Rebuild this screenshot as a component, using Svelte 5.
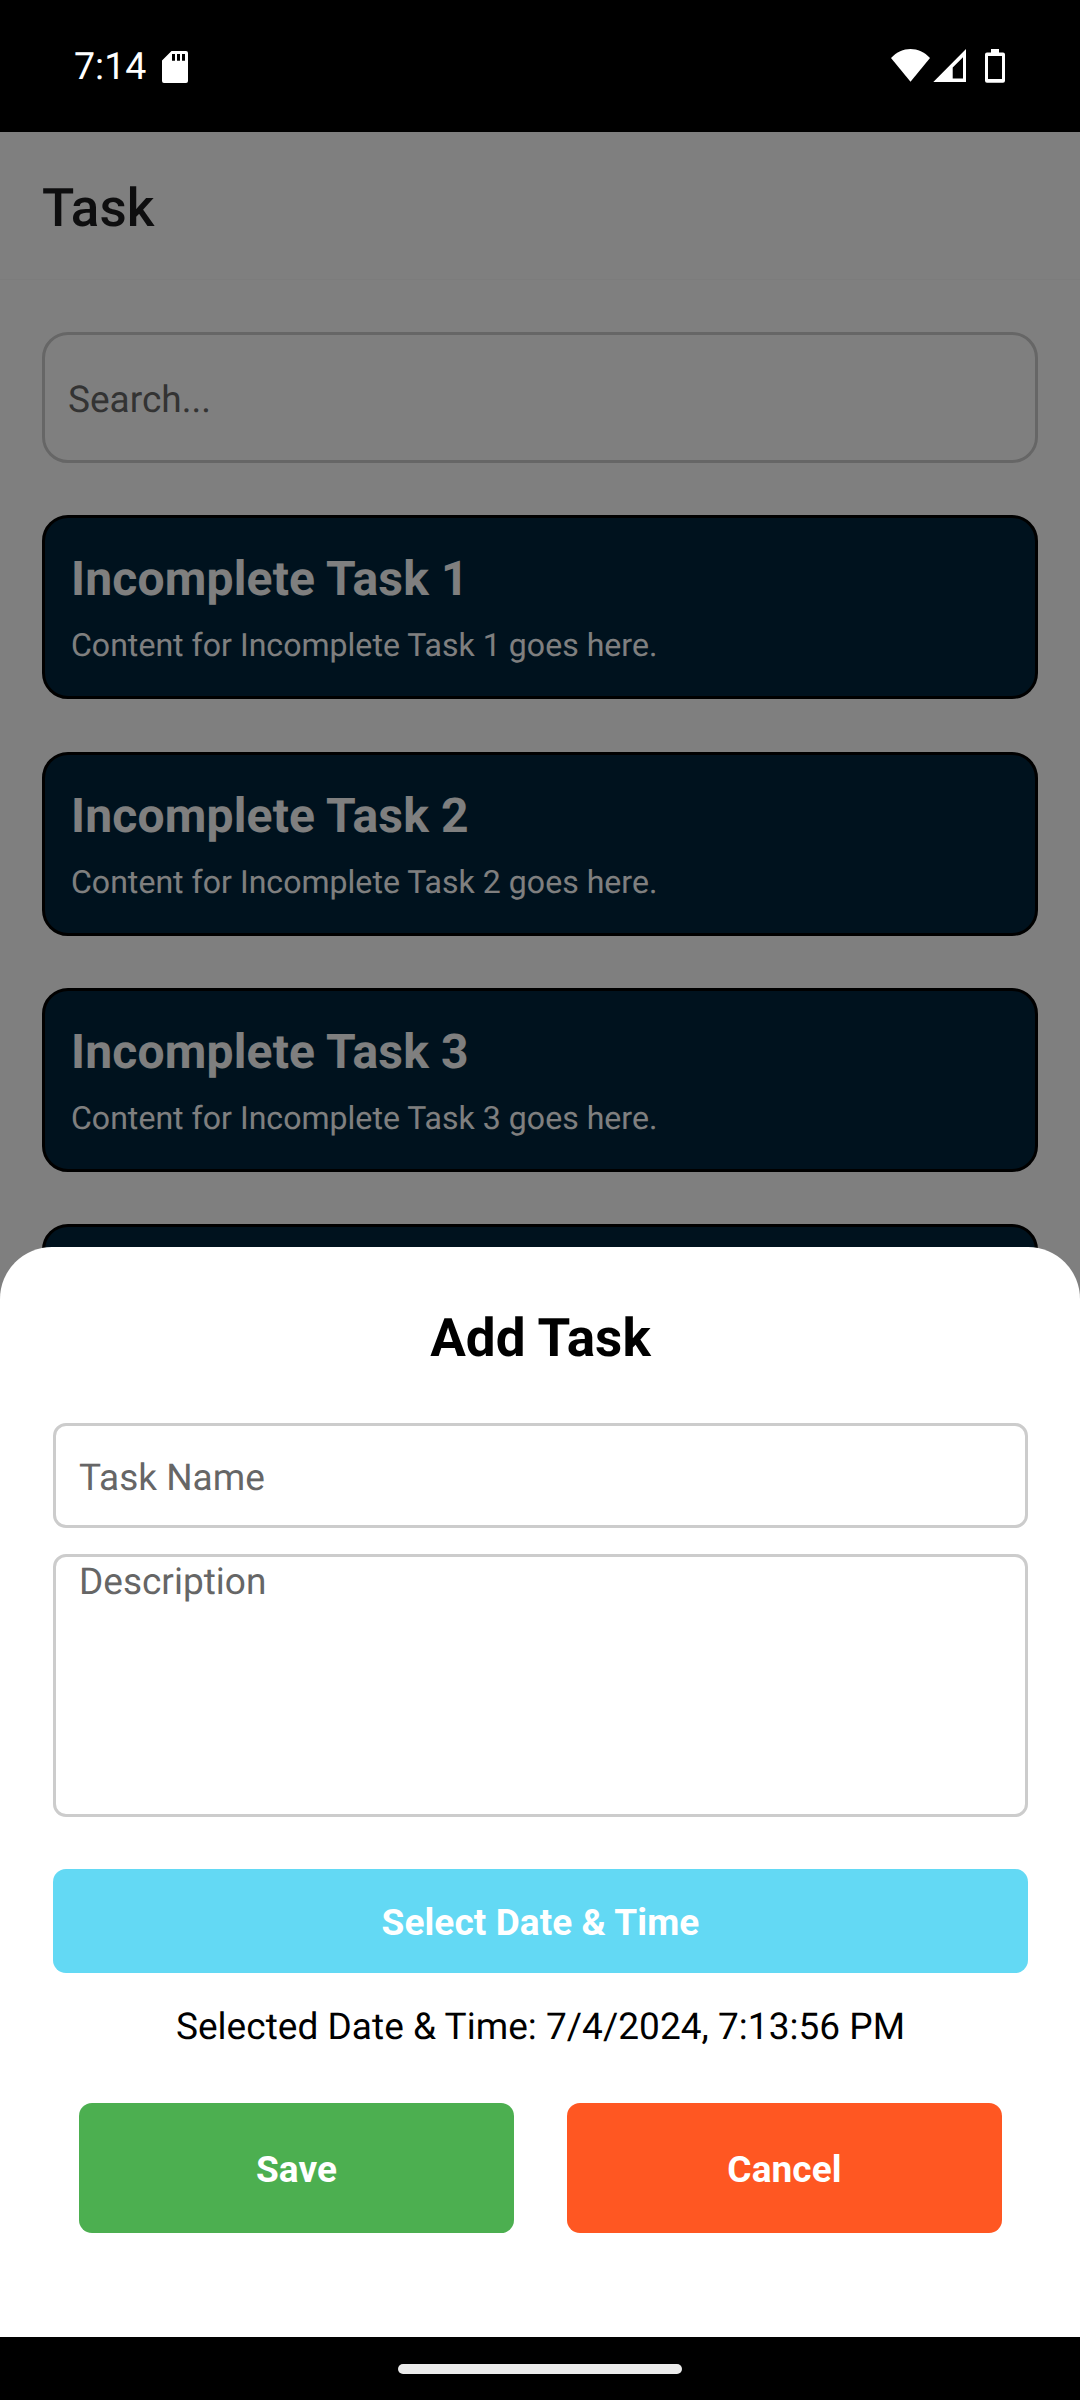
<script>
  const tasks = [1, 2, 3].map((n) => ({
    title: `Incomplete Task ${n}`,
    content: `Content for Incomplete Task ${n} goes here.`
  }));
  const selected = '7/4/2024, 7:13:56 PM';
</script>

<div class="screen">
  <div class="status">
    <span class="time">7:14</span>
    <svg class="sd" width="26" height="32" viewBox="0 0 26 32">
      <path
        fill="#fff"
        fill-rule="evenodd"
        d="M9.5 0H24a2 2 0 0 1 2 2v28a2 2 0 0 1-2 2H2a2 2 0 0 1-2-2V9.500zM10 3v6.700h3V3zM15 3v6.700h3V3zM20 3v6.700h3V3z"
      />
    </svg>
    <svg class="signals" width="114" height="34" viewBox="0 0 114 34">
      <path fill="#fff" d="M0 9C11-3 28-3 39 9L19.500 32.700z" />
      <path fill="#fff" fill-rule="evenodd" d="M75 0v33H42.300zM72 8.300L61.700 18.500V29.500H72z" />
      <path
        fill="#fff"
        fill-rule="evenodd"
        d="M100 0h8v3.500h4a2 2 0 0 1 2 2V31.800a2 2 0 0 1-2 2H96a2 2 0 0 1-2-2V5.500a2 2 0 0 1 2-2h4zM97 7v23h14V7z"
      />
    </svg>
  </div>

  <div class="app">
    <header>Task</header>
    <main>
      <div class="search">Search...</div>
      {#each tasks as task}
        <article>
          <h2>{task.title}</h2>
          <p>{task.content}</p>
        </article>
      {/each}
      <!-- Only the top edge of the next card shows above the sheet -->
      <article></article>
    </main>
    <div class="scrim"></div>
    <section class="sheet">
      <h1>Add Task</h1>
      <div class="field name">Task Name</div>
      <div class="field description">Description</div>
      <button class="date">Select Date &amp; Time</button>
      <p class="selected">Selected Date &amp; Time: {selected}</p>
      <div class="actions">
        <button class="save">Save</button>
        <button class="cancel">Cancel</button>
      </div>
    </section>
  </div>

  <div class="nav"><div class="pill"></div></div>
</div>

<style>
  :global(body) {
    margin: 0;
    background: #000;
  }

  .screen {
    width: 1080px;
    height: 2400px;
    display: flex;
    flex-direction: column;
    overflow: hidden;
    background: #000;
    font-family: Roboto, sans-serif;
    font-size: 37px;
    text-rendering: geometricPrecision;
  }

  .screen * {
    box-sizing: border-box;
  }

  h1,
  h2,
  p {
    margin: 0;
  }

  .status {
    height: 132px;
    flex: none;
    display: flex;
    align-items: flex-start;
    padding: 0 75px 0 74px;
    color: #fff;
  }

  .time {
    width: 88px;
    padding-top: 45px;
    font-size: 37.5px;
    line-height: 44px;
    white-space: nowrap;
  }

  .sd {
    margin-top: 51px;
  }

  .signals {
    margin: 49px 0 0 auto;
  }

  .app {
    position: relative;
    height: 2205px;
    flex: none;
    overflow: hidden;
    background: #fff;
  }

  header {
    height: 148px;
    padding: 44px 42px 0;
    border-bottom: 1px solid #f8f8f8;
    font-size: 53px;
    font-weight: 500;
    line-height: 64px;
    color: #1c1c1e;
  }

  main {
    display: flex;
    flex-direction: column;
    gap: 52.4px;
    padding: 52px 42px 0;
  }

  .search {
    height: 131px;
    border: 3px solid #ccc;
    border-radius: 26px;
    padding: 44px 23px 0;
    line-height: 44px;
    color: #666;
  }

  article {
    height: 183.9px;
    flex: none;
    border: 3px solid #000;
    border-radius: 26px;
    background: #00243c;
    padding: 29px 26px 0;
    color: #fff;
  }

  h2 {
    font-size: 48px;
    line-height: 64px;
    font-weight: 700;
    letter-spacing: 0.18px;
  }

  article p {
    margin-top: 13px;
    font-size: 32px;
    line-height: 42px;
    letter-spacing: 0.04px;
  }

  .scrim {
    position: absolute;
    inset: 0;
    background: rgba(0, 0, 0, 0.5);
  }

  .sheet {
    position: absolute;
    left: 0;
    right: 0;
    bottom: 0;
    height: 1090px;
    display: flex;
    flex-direction: column;
    padding: 59px 52px 0 53px;
    border-radius: 52px 52px 0 0;
    background: #fff;
  }

  h1 {
    height: 117px;
    font-size: 53px;
    line-height: 64px;
    font-weight: 700;
    text-align: center;
    letter-spacing: 0.1px;
  }

  .field {
    flex: none;
    border: 3px solid #ccc;
    border-radius: 13px;
    padding: 0 23px;
    line-height: 44px;
    color: #666;
  }

  .name {
    height: 105px;
    padding-top: 31px;
    margin-bottom: 26px;
  }

  .description {
    height: 263px;
    padding-top: 4px;
    margin-bottom: 52px;
  }

  button {
    border: 0;
    border-radius: 13px;
    padding: 2px 0 0;
    font: inherit;
    font-weight: 700;
    letter-spacing: 0.08px;
    color: #fff;
  }

  .date {
    height: 104px;
    flex: none;
    background: #63d9f4;
  }

  .selected {
    margin-top: 33px;
    line-height: 44px;
    text-align: center;
    letter-spacing: 0.03px;
    color: #000;
  }

  .actions {
    display: flex;
    gap: 53px;
    margin-top: 53px;
    padding: 0 26px;
  }

  .actions button {
    flex: 1;
    height: 130px;
  }

  .save {
    background: #4caf50;
  }

  .cancel {
    background: #ff5722;
  }

  .nav {
    height: 63px;
    display: flex;
    justify-content: center;
    padding-top: 27px;
  }

  .pill {
    width: 284px;
    height: 10px;
    border-radius: 5px;
    background: #ebebeb;
  }
</style>
